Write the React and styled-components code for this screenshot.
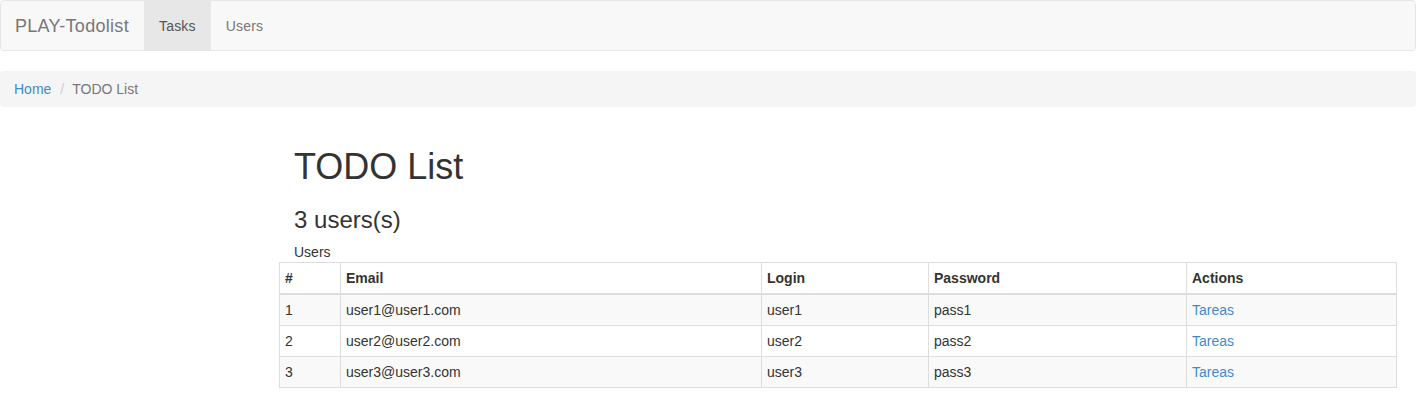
import React from 'react';
import styled, { createGlobalStyle } from 'styled-components';

const GlobalStyle = createGlobalStyle`
    html, body {
        margin: 0;
        padding: 0;
        background: #fff;
    }
    body {
        font-family: "Liberation Sans", Arial, Helvetica, sans-serif;
        font-size: 14px;
        line-height: 20px;
        color: #333;
    }
    * {
        box-sizing: border-box;
    }
`;

const Navbar = styled.nav`
    display: flex;
    align-items: stretch;
    height: 51px;
    background: #f8f8f8;
    border: 1px solid #e7e7e7;
    border-radius: 4px;
    margin-bottom: 20px;
`;

const Brand = styled.a`
    display: block;
    padding: 15px 15px 15px 14px;
    font-size: 18px;
    line-height: 20px;
    letter-spacing: 0.3px;
    color: #777;
    text-decoration: none;
`;

const NavItem = styled.a`
    display: block;
    padding: 15px 15px;
    line-height: 20px;
    letter-spacing: 0.2px;
    color: ${p => (p.$active ? '#555' : '#777')};
    background: ${p => (p.$active ? '#e7e7e7' : 'transparent')};
    text-decoration: none;
`;

const Breadcrumb = styled.ol`
    display: flex;
    list-style: none;
    margin: 0 0 20px;
    padding: 8px 14px;
    background: #f5f5f5;
    border-radius: 4px;
`;

const Crumb = styled.li`
    color: #777;

    & + &::before {
        content: "/";
        padding: 0 8px 0 9px;
        color: #ccc;
    }
`;

const Link = styled.a`
    color: #428bca;
    text-decoration: none;
`;

const Content = styled.div`
    display: flow-root;
    margin: 0 19px 0 279px;
`;

const Heading = styled.div`
    padding-left: 15px;
`;

const Title = styled.h1`
    margin: 20px 0 10px;
    font-size: 36px;
    font-weight: 500;
    line-height: 40px;
`;

const Subtitle = styled.h3`
    margin: 20px 0 9px;
    font-size: 24px;
    font-weight: 500;
    line-height: 26px;
`;

const Caption = styled.div`
    line-height: 20px;
`;

const Table = styled.table`
    width: 100%;
    border-collapse: collapse;
    border: 1px solid #ddd;
`;

const Th = styled.th`
    text-align: left;
    font-weight: bold;
    padding: 5px;
    line-height: 20px;
    border: 1px solid #ddd;
    border-bottom: 2px solid #ddd;
    width: ${p => p.$w}px;
`;

const Row = styled.tr`
    background: ${p => (p.$striped ? '#f9f9f9' : '#fff')};
`;

const Td = styled.td`
    padding: 5px;
    line-height: 20px;
    border: 1px solid #ddd;
`;

const users = [
    { id: 1, email: 'user1@user1.com', login: 'user1', password: 'pass1' },
    { id: 2, email: 'user2@user2.com', login: 'user2', password: 'pass2' },
    { id: 3, email: 'user3@user3.com', login: 'user3', password: 'pass3' },
];

const columns = [
    { label: '#', w: 61 },
    { label: 'Email', w: 421 },
    { label: 'Login', w: 167 },
    { label: 'Password', w: 258 },
    { label: 'Actions', w: 210 },
];

const App = () => {
    return (
        <>
            <GlobalStyle />
            <Navbar>
                <Brand href="#">PLAY-Todolist</Brand>
                <NavItem href="#" $active>Tasks</NavItem>
                <NavItem href="#">Users</NavItem>
            </Navbar>

            <Breadcrumb>
                <Crumb><Link href="#">Home</Link></Crumb>
                <Crumb>TODO List</Crumb>
            </Breadcrumb>

            <Content>
                <Heading>
                    <Title>TODO List</Title>
                    <Subtitle>{users.length} users(s)</Subtitle>
                    <Caption>Users</Caption>
                </Heading>
                <Table>
                    <thead>
                        <tr>
                            {columns.map(c => (
                                <Th key={c.label} $w={c.w}>{c.label}</Th>
                            ))}
                        </tr>
                    </thead>
                    <tbody>
                        {users.map((u, idx) => (
                            <Row key={u.id} $striped={idx % 2 === 0}>
                                <Td>{u.id}</Td>
                                <Td>{u.email}</Td>
                                <Td>{u.login}</Td>
                                <Td>{u.password}</Td>
                                <Td><Link href="#">Tareas</Link></Td>
                            </Row>
                        ))}
                    </tbody>
                </Table>
            </Content>
        </>
    );
};

export default App;
